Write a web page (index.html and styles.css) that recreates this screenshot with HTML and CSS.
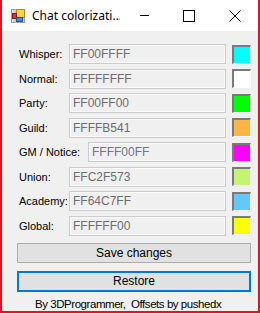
FILE: index.html
```html
<!DOCTYPE html>
<html lang="en">

<head>
    <meta charset="UTF-8">
    <title>Chat colorization</title>
    <meta name="viewport" content="width=device-width, initial-scale=1.0">
    <link rel="stylesheet" href="styles.css">
</head>

<body>
    <div class="ventana">
        <div class="titulo">
            <svg class="icono" width="14" height="14" viewBox="0 0 14 14">
                <rect x="0.5" y="0.5" width="13" height="13" fill="#d8d8d8" stroke="#9a9a9a"/>
                <path d="M0 5h14M0 9h14M5 0v14M9 0v14" stroke="#b8b8b8" stroke-width="1"/>
                <rect x="5.5" y="0.5" width="8" height="8" fill="#f7d24a" stroke="#b08a1a"/>
                <rect x="1.5" y="4.5" width="4" height="5" fill="#d8342a" stroke="#8a1a14"/>
                <rect x="5.5" y="8.5" width="6" height="4" fill="#4a86d8" stroke="#1f4f96"/>
            </svg>
            <span class="titulo-texto">Chat colorizati...</span>
            <div class="control minimizar"></div>
            <div class="control"><span class="maximizar"></span></div>
            <div class="control">
                <svg width="12" height="12" viewBox="0 0 12 12"><path d="M0.5 0.5l11 11M11.5 0.5l-11 11" stroke="#000" stroke-width="1"/></svg>
            </div>
        </div>

        <div class="cliente">
            <div class="filas">
                <div class="fila">
                    <span class="etiqueta">Whisper:</span>
                    <input class="valor" type="text" value="FF00FFFF" readonly>
                    <span class="muestra" style="background:#00ffff"></span>
                </div>
                <div class="fila">
                    <span class="etiqueta">Normal:</span>
                    <input class="valor" type="text" value="FFFFFFFF" readonly>
                    <span class="muestra" style="background:#ffffff"></span>
                </div>
                <div class="fila">
                    <span class="etiqueta">Party:</span>
                    <input class="valor" type="text" value="FF00FF00" readonly>
                    <span class="muestra" style="background:#00ff00"></span>
                </div>
                <div class="fila">
                    <span class="etiqueta">Guild:</span>
                    <input class="valor" type="text" value="FFFFB541" readonly>
                    <span class="muestra" style="background:#ffb541"></span>
                </div>
                <div class="fila">
                    <span class="etiqueta ancha">GM / Notice:</span>
                    <input class="valor azul" type="text" value="FFFF00FF" readonly>
                    <span class="muestra" style="background:#ff00ff"></span>
                </div>
                <div class="fila">
                    <span class="etiqueta">Union:</span>
                    <input class="valor" type="text" value="FFC2F573" readonly>
                    <span class="muestra" style="background:#c2f573"></span>
                </div>
                <div class="fila">
                    <span class="etiqueta">Academy:</span>
                    <input class="valor" type="text" value="FF64C7FF" readonly>
                    <span class="muestra" style="background:#64c7ff"></span>
                </div>
                <div class="fila">
                    <span class="etiqueta">Global:</span>
                    <input class="valor" type="text" value="FFFFFF00" readonly>
                    <span class="muestra" style="background:#ffff00"></span>
                </div>
            </div>

            <button class="boton guardar">Save changes</button>
            <button class="boton restaurar">Restore</button>
            <p class="creditos">By 3DProgrammer,&nbsp; Offsets by pushedx</p>
        </div>
    </div>
</body>
</html>
```

FILE: styles.css
```css
/* Sin márgenes, la ventana ocupa todo */
body, html {
margin: 0;
padding: 0;
width: 260px;
height: 313px;
overflow: hidden;
}

/* Marco rojo de la ventana */
.ventana {
box-sizing: border-box;
width: 260px;
height: 313px;
border-left: 2px solid #e81123;
border-right: 2px solid #e81123;
border-bottom: 2px solid #e81123;
display: flex;
flex-direction: column;
font-family: "Liberation Sans", Arial, sans-serif;
font-size: 11px;
color: #000;
}

/* Barra de título: icono, texto y tres botones */
.titulo {
height: 31px;
background: #fff;
display: grid;
grid-template-columns: auto 1fr 46px 46px 46px;
align-items: center;
flex-shrink: 0;
}

.icono {
display: block;
margin-left: 9px;
margin-top: 1px;
}

.titulo-texto {
min-width: 0;
margin-left: 7px;
font-family: "Noto Sans", "Open Sans", sans-serif;
font-size: 12px;
white-space: nowrap;
overflow: hidden;
}

/* Cada botón de la barra de título */
.control {
height: 31px;
display: flex;
align-items: center;
justify-content: center;
}

.control svg {
display: block;
}

/* Raya de minimizar dibujada como fondo */
.minimizar {
background: linear-gradient(#000, #000) no-repeat 20px 15px / 9px 1px;
}

.maximizar {
display: block;
width: 10px;
height: 10px;
border: 1px solid #000;
}

/* Área del formulario */
.cliente {
flex: 1;
background: #f0f0f0;
padding: 13px 7px 0 15px;
display: flex;
flex-direction: column;
}

.filas {
display: flex;
flex-direction: column;
gap: 4.57px;
}

.fila {
display: flex;
align-items: center;
height: 20px;
}

.etiqueta {
width: 50px;
padding-left: 2px;
flex-shrink: 0;
}

.etiqueta.ancha {
width: 69px;
}

/* Cajas de texto de solo lectura */
.valor {
box-sizing: border-box;
flex: 1;
min-width: 0;
height: 20px;
margin: 0;
padding: 0 0 0 3px;
border: 1px solid #cbcbcb;
box-shadow: inset 0 0 0 1px #fafafa;
background: #f0f0f0;
color: #6d6d6d;
font-family: "Liberation Sans", Arial, sans-serif;
font-size: 12px;
outline: none;
}

.valor.azul {
color: #6f7390;
}

/* Muestra de color hundida */
.muestra {
box-sizing: border-box;
width: 19px;
height: 19px;
margin-left: 6px;
flex-shrink: 0;
border-top: 2px solid #7a7a7a;
border-left: 2px solid #7a7a7a;
border-right: 1px solid #ffffff;
border-bottom: 1px solid #ffffff;
}

/* Botones */
.boton {
box-sizing: border-box;
width: 234px;
margin: 0;
padding: 0;
background: #e1e1e1;
border: 1px solid #adadad;
font-family: "Liberation Sans", Arial, sans-serif;
font-size: 12px;
color: #000;
}

.guardar {
height: 20px;
margin-top: 7px;
}

.restaurar {
height: 21px;
margin-top: 8px;
border: 2px solid #0078d7;
}

.creditos {
margin: 5px 0 0 18px;
font-size: 11.5px;
letter-spacing: -0.45px;
line-height: 14px;
}
```
